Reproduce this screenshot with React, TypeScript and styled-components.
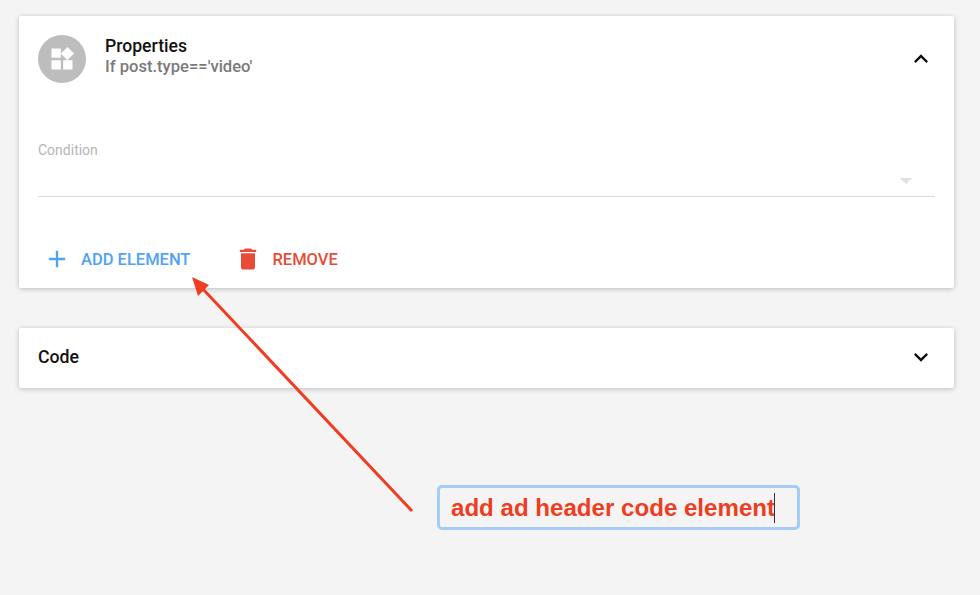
import React from 'react';
import styled, { createGlobalStyle } from 'styled-components';
import { MdAdd, MdDelete, MdKeyboardArrowDown, MdKeyboardArrowUp, MdWidgets } from 'react-icons/md';

const GlobalStyle = createGlobalStyle`
  html, body {
    margin: 0;
    padding: 0;
    background: #f4f4f4;
    font-family: Roboto, "Liberation Sans", sans-serif;
  }
`;

const App = () => {
  return (
    <Page>
      <GlobalStyle />
      <PropertiesCard>
        <CardHeader>
          <Avatar>
            <MdWidgets size={28} />
          </Avatar>
          <Titles>
            <Title>Properties</Title>
            <Subtitle>If post.type=='video'</Subtitle>
          </Titles>
          <Chevron>
            <MdKeyboardArrowUp size={28} />
          </Chevron>
        </CardHeader>
        <Field>
          <FieldLabel>Condition</FieldLabel>
          <SelectRow>
            <SelectArrow />
          </SelectRow>
        </Field>
        <Actions>
          <ActionButton $color="#4fa3f2">
            <MdAdd size={28} />
            Add Element
          </ActionButton>
          <ActionButton $color="#e84c38">
            <MdDelete size={28} />
            Remove
          </ActionButton>
        </Actions>
      </PropertiesCard>

      <CodeCard>
        <CodeTitle>Code</CodeTitle>
        <Chevron>
          <MdKeyboardArrowDown size={28} />
        </Chevron>
      </CodeCard>

      <ArrowOverlay width="980" height="595" viewBox="0 0 980 595">
        <line x1="412" y1="511" x2="201" y2="287" stroke="#f03c20" strokeWidth="3" />
        <polygon points="192,277 209,285 198,296" fill="#f03c20" />
      </ArrowOverlay>

      <Annotation>
        add ad header code element
        <Caret />
      </Annotation>
    </Page>
  );
};

const Page = styled.div`
  position: relative;
  width: 980px;
  height: 595px;
  box-sizing: border-box;
  padding: 16px 26px 0 19px;
  overflow: hidden;
  background: #f4f4f4;
`;

const Card = styled.section`
  background: #fff;
  border-radius: 2px;
  box-shadow: 0 1px 5px rgba(0, 0, 0, 0.24);
`;

const PropertiesCard = styled(Card)`
  height: 272px;
  box-sizing: border-box;
  padding: 19px 19px 0;
  display: flex;
  flex-direction: column;
`;

const CardHeader = styled.header`
  display: flex;
  align-items: center;
  height: 48px;
`;

const Avatar = styled.div`
  width: 48px;
  height: 48px;
  border-radius: 50%;
  background: #bdbdbd;
  color: #fff;
  display: flex;
  align-items: center;
  justify-content: center;
  margin-right: 19px;
`;

const Titles = styled.div`
  flex: 1;
  display: flex;
  flex-direction: column;
  gap: 1px;
  margin-top: -6px;
`;

const Title = styled.div`
  font-size: 17.6px;
  line-height: 20px;
  font-weight: 500;
  color: #111;
`;

const Subtitle = styled.div`
  font-size: 16.6px;
  line-height: 19px;
  font-weight: 500;
  color: #7a7a7a;
`;

const Chevron = styled.div`
  width: 28px;
  height: 28px;
  color: #111;
`;

const Field = styled.div`
  margin-top: 58px;
`;

const FieldLabel = styled.div`
  font-size: 14px;
  line-height: 18px;
  color: #b5b5b5;
`;

const SelectRow = styled.div`
  height: 38px;
  box-sizing: border-box;
  border-bottom: 1px solid #dcdcdc;
  display: flex;
  justify-content: flex-end;
  align-items: center;
  padding: 0 23px 0 0;
`;

const SelectArrow = styled.div`
  width: 0;
  height: 0;
  margin-top: 6px;
  border-left: 6px solid transparent;
  border-right: 6px solid transparent;
  border-top: 6px solid #e0e0e0;
`;

const Actions = styled.div`
  display: flex;
  align-items: center;
  gap: 44px;
  margin-top: 48px;
  margin-left: 5px;
`;

const ActionButton = styled.button<{ $color: string }>`
  display: flex;
  align-items: center;
  gap: 10px;
  padding: 0;
  border: 0;
  background: none;
  color: ${(p) => p.$color};
  font-family: Roboto, "Liberation Sans", sans-serif;
  font-size: 16.5px;
  font-weight: 500;
  text-transform: uppercase;
  height: 28px;
`;

const CodeCard = styled(Card)`
  height: 60px;
  margin-top: 40px;
  box-sizing: border-box;
  padding: 0 19px 2px;
  display: flex;
  align-items: center;
  justify-content: space-between;
`;

const CodeTitle = styled.div`
  font-size: 17.7px;
  font-weight: 500;
  color: #111;
`;

const ArrowOverlay = styled.svg`
  position: absolute;
  left: 0;
  top: 0;
  pointer-events: none;
`;

const Annotation = styled.div`
  position: absolute;
  left: 437px;
  top: 485px;
  width: 363px;
  height: 45px;
  box-sizing: border-box;
  border: 3px solid #a5cbf7;
  border-radius: 5px;
  padding-left: 11px;
  font-family: "Liberation Sans", Arial, sans-serif;
  font-weight: 700;
  font-size: 24.1px;
  line-height: 40px;
  color: #f03c20;
  white-space: nowrap;
`;

const Caret = styled.span`
  position: absolute;
  left: 334px;
  top: 5px;
  width: 1px;
  height: 30px;
  background: #333;
`;

export default App;
